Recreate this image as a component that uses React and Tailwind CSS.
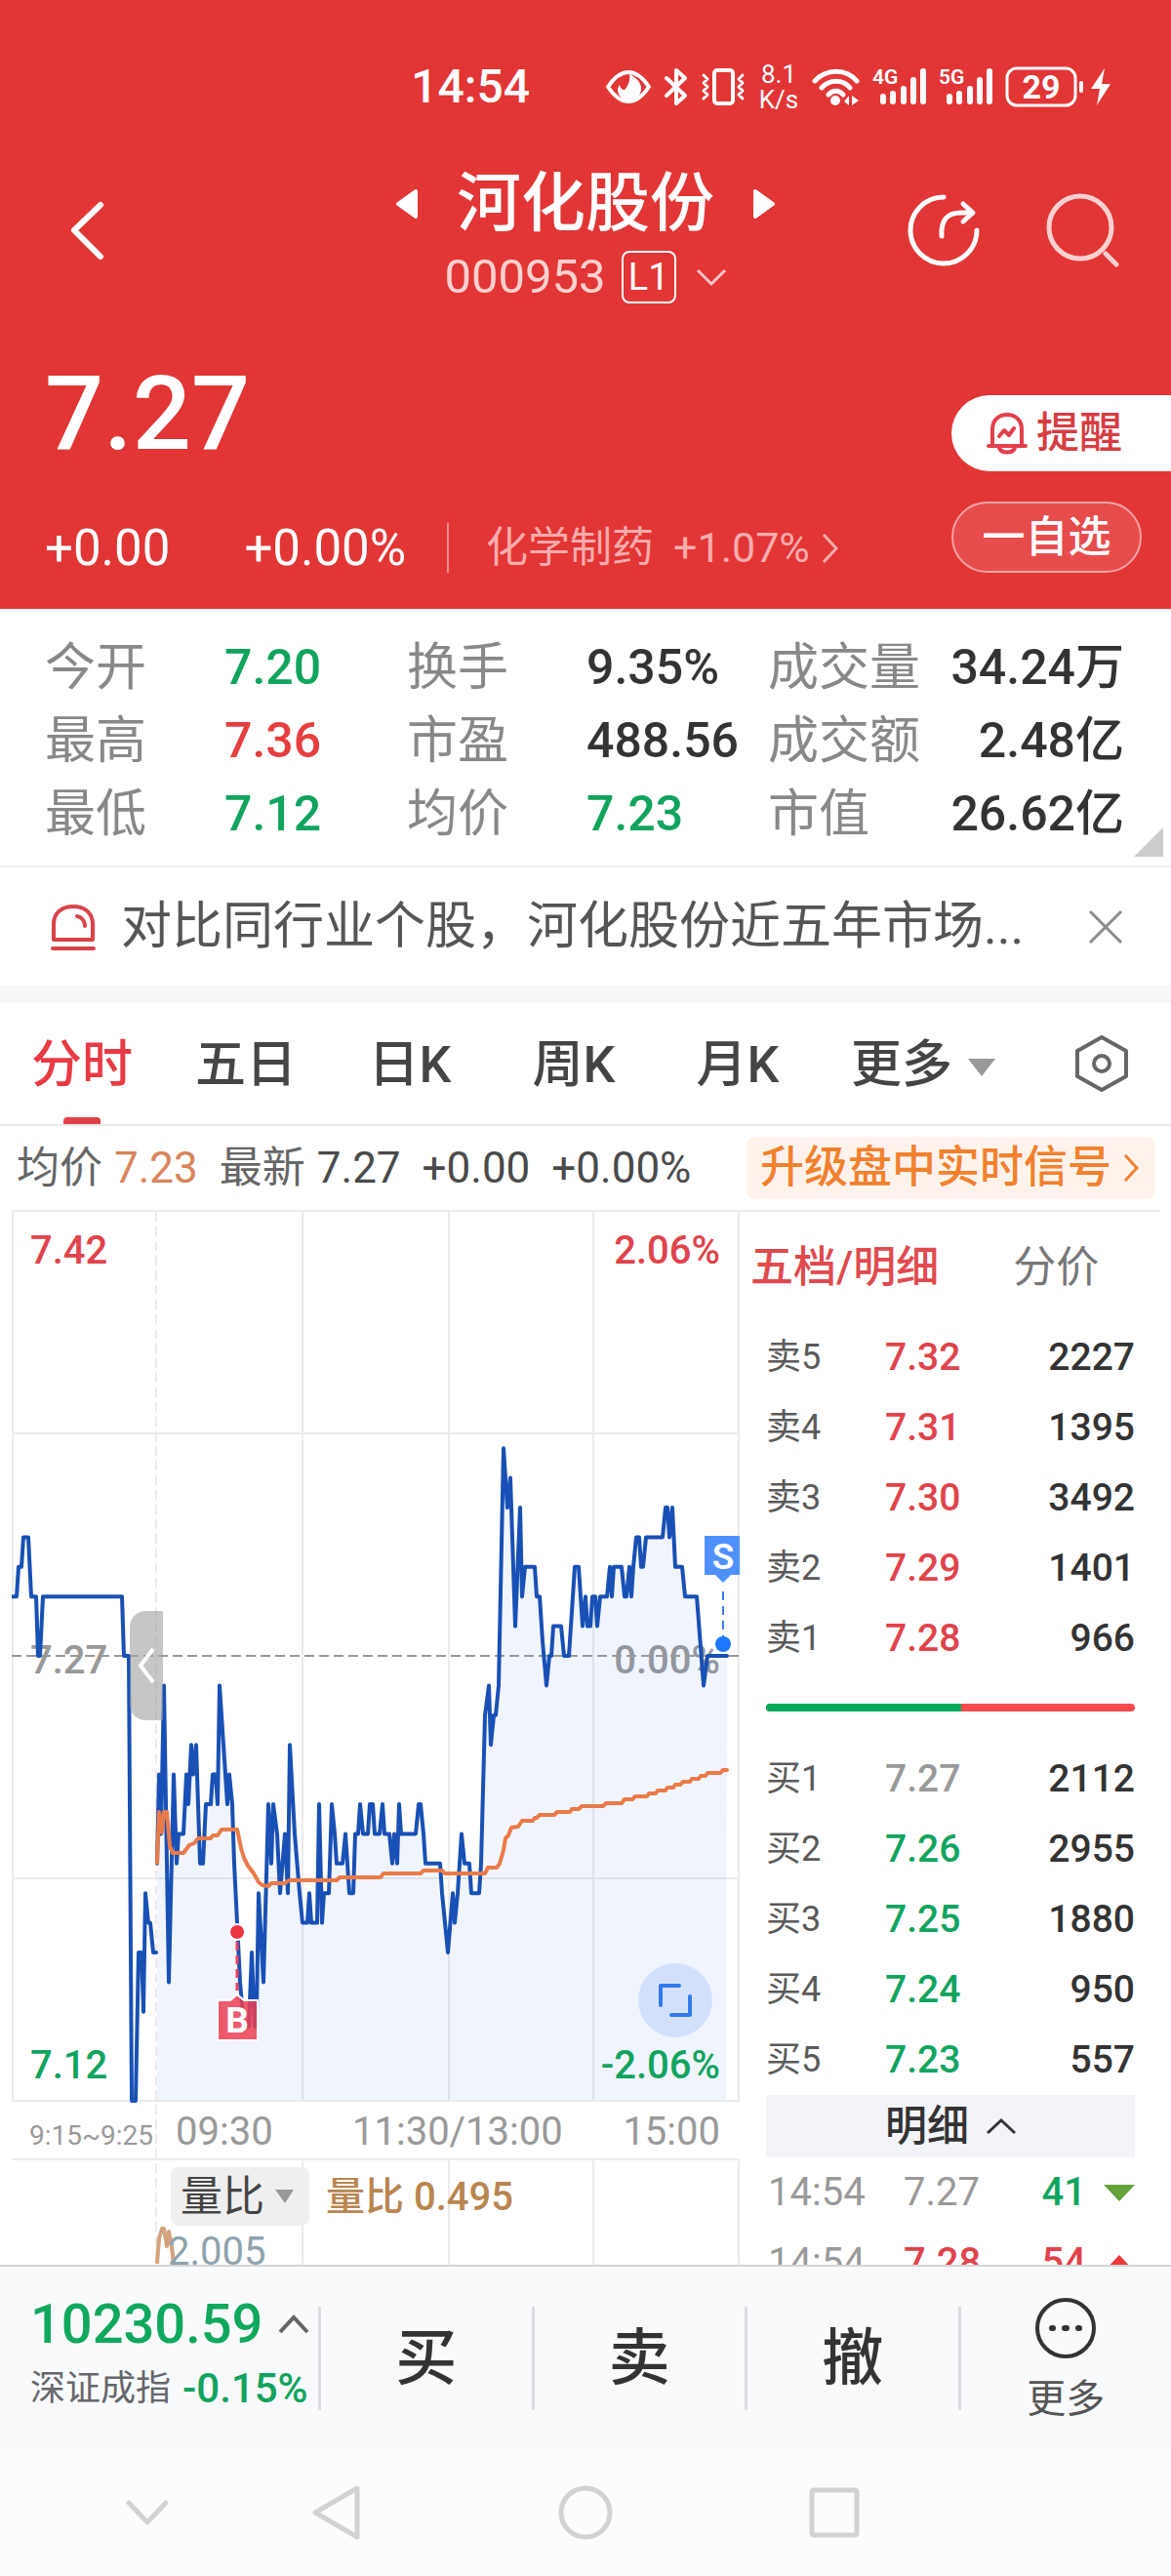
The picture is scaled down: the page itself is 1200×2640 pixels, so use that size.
import { useState } from "react";

const RED = "#e0434b";
const GREEN = "#10a45f";
const GRAY = "#999999";

// [x, ticks from the previous close], one tick is 0.01
const auctionLine = [
  [12, 2], [17, 2], [19, 3], [22, 3], [24, 4], [29, 4], [32, 2], [37, 2], [39, 0], [41, 0], [44, 2], [125, 2],
  [127, 0], [132, 0], [135, -15], [139, -15], [142, -10], [145, -10], [147, -12], [149, -8], [152, -9],
  [154, -9], [157, -10], [160, -10],
];

const priceLine = [
  [161, -7], [163, -4], [165, -6], [168, -1], [173, -11], [178, -4], [181, -7], [183, -6], [188, -6], [191, -4],
  [193, -5], [196, -3], [198, -4], [201, -3], [205, -7], [208, -7], [211, -5], [216, -5], [218, -4], [221, -4],
  [223, -5], [225, -1], [229, -3], [233, -5], [235, -4], [238, -5], [240, -7], [243, -9], [246, -11], [250, -12.5],
  [255, -12.5], [258, -10], [261, -12.5], [263, -12], [265, -8], [270, -11], [275, -5], [278, -7], [280, -5],
  [284, -6], [287, -8], [292, -6], [295, -8], [297, -3], [302, -6], [307, -8], [310, -9], [315, -9], [317, -8],
  [319, -9], [325, -9], [327, -5], [330, -9], [332, -8], [337, -8], [340, -5], [343, -6], [345, -7], [351, -7],
  [354, -6], [358, -8], [362, -8], [364, -6], [367, -6], [369, -5], [372, -6], [377, -6], [379, -5], [382, -5],
  [384, -6], [389, -6], [392, -5], [394, -6], [399, -6], [402, -7], [404, -6], [407, -7], [409, -5], [411, -6],
  [426, -6], [429, -5], [431, -5], [434, -6], [436, -7], [451, -7], [453, -8], [459, -10], [464, -8], [466, -9],
  [469, -8], [473, -6], [476, -7], [481, -7], [483, -8], [491, -8], [493, -7], [497, -2], [501, -1], [503, -3],
  [506, -2], [508, -2], [511, -1], [516, 7], [520, 5], [523, 6], [528, 1], [533, 5], [535, 2], [538, 3],
  [548, 3], [550, 2], [553, 2], [556, 0.5], [560, -1], [563, 0], [565, 0], [567, 1], [575, 1], [578, 0], [583, 0],
  [586, 1.5], [589, 3], [593, 3], [597, 1], [600, 2], [602, 1], [605, 1], [607, 2], [610, 2], [612, 1], [615, 2],
  [622, 2], [625, 3], [627, 2], [629, 3], [637, 3], [640, 2], [642, 2], [645, 3], [647, 2], [649, 3], [652, 4],
  [655, 4], [657, 3], [659, 3], [662, 4], [679, 4], [682, 5], [684, 5], [686, 4], [689, 5], [692, 3], [699, 3],
  [702, 2], [714, 2], [718, 0.3], [721, -1], [725, 0], [745, 0],
];

// running average, already in chart units
const averageLine =
  "161,669 163,617 166,638 168,617 171,617 174,652 177,659 188,659 194,651 199,649 203,644 216,644 218,641 223,641 " +
  "227,635 243,635 247,654 250,664 254,672 260,680 265,689 269,692 275,693 278,690 292,690 296,687 345,687 348,684 " +
  "390,684 393,680 431,680 434,677 453,677 456,680 497,680 500,674 509,674 512,670 516,656 518,644 521,641 524,633 " +
  "531,632 535,626 546,626 548,623 550,623 553,620 568,620 571,617 584,617 586,614 593,614 596,611 618,611 621,608 " +
  "637,608 640,604 648,604 651,601 663,601 665,598 672,598 674,595 682,595 684,592 690,592 692,589 697,589 700,586 " +
  "707,586 709,583 716,583 718,580 723,580 725,577 738,577 741,574 745,574";

const toPoints = (line) => line.map(([x, tick]) => `${x},${457 - tick * 30.4}`).join(" ");

const stats = [
  ["今开", "7.20", "text-[#10a45f]"],
  ["换手", "9.35%", "text-[#333333]"],
  ["成交量", "34.24万", "text-[#333333]"],
  ["最高", "7.36", "text-[#e63e3e]"],
  ["市盈", "488.56", "text-[#333333]"],
  ["成交额", "2.48亿", "text-[#333333]"],
  ["最低", "7.12", "text-[#10a45f]"],
  ["均价", "7.23", "text-[#10a45f]"],
  ["市值", "26.62亿", "text-[#333333]"],
];

const sells = [
  ["卖5", "7.32", "2227"],
  ["卖4", "7.31", "1395"],
  ["卖3", "7.30", "3492"],
  ["卖2", "7.29", "1401"],
  ["卖1", "7.28", "966"],
];

const buys = [
  ["买1", "7.27", "2112"],
  ["买2", "7.26", "2955"],
  ["买3", "7.25", "1880"],
  ["买4", "7.24", "950"],
  ["买5", "7.23", "557"],
];

function priceColor(price) {
  if (price > 7.27) return "text-[#e0434b]";
  if (price < 7.27) return "text-[#10a45f]";
  return "text-[#999999]";
}

function Signal({ label }) {
  return (
    <svg width="55" height="44" viewBox="0 -4 55 44" fill="none" stroke="#fff" strokeWidth="6" strokeLinecap="round" className="mb-1">
      <text x="0" y="17" fontSize="21" fontWeight="600" fill="#fff" stroke="none">{label}</text>
      <path d="M11 30v5M21 27v8M32 22v13M42 13v22M52 4v31" />
    </svg>
  );
}

function StatusBar() {
  return (
    <div className="flex h-[140px] items-center justify-end gap-[13px] pt-[38px] pr-[62px]">
      <span className="mr-[64px] text-[48px] leading-[56px] font-medium">14:54</span>
      <svg width="48" height="36" viewBox="0 0 48 36">
        <path d="M3 18C11 6 18 3 24 3s13 3 21 15c-8 12-15 15-21 15S11 30 3 18Z" fill="none" stroke="#fff" strokeWidth="4" strokeLinejoin="round" />
        <path d="M25 5c8 4 12 9 12 15 0 7-6 12-12 12-7 0-12-5-12-11 0-2 1-4 2-5 1 4 3 5 5 5 4-4 6-10 5-16Z" fill="#fff" />
      </svg>
      <svg width="24" height="40" viewBox="0 0 24 40" fill="none" stroke="#fff" strokeWidth="4" strokeLinejoin="round" strokeLinecap="round">
        <path d="M2 11l19 18-9 8V3l9 8L2 29" />
      </svg>
      <svg width="46" height="40" viewBox="0 0 46 40" fill="none" stroke="#fff" strokeWidth="4" strokeLinejoin="round" strokeLinecap="round">
        <rect x="14" y="3" width="19" height="34" rx="3" />
        <path d="M3 8l4 4-4 4 4 4-4 4 4 4-4 4M43 8l-4 4 4 4-4 4 4 4-4 4 4 4" strokeWidth="3" />
      </svg>
      <span className="flex w-[42px] flex-col items-center text-[26px] leading-[26px]">
        <span>8.1</span>
        <span>K/s</span>
      </span>
      <svg width="49" height="40" viewBox="0 0 49 40" fill="none" stroke="#fff" strokeWidth="5" strokeLinecap="round">
        <path d="M3 14c12-13 32-13 43 0M10 21c8-9 22-9 29 0M17 28c4-5 11-5 15 0" />
        <circle cx="24" cy="34" r="5" fill="#fff" stroke="none" />
        <path d="M38 29v10l-5-4zM41 29v10l7-5z" fill="#fff" stroke="none" />
      </svg>
      <Signal label="4G" />
      <Signal label="5G" />
      <svg width="108" height="42" viewBox="0 0 108 42">
        <rect x="2" y="2" width="70" height="38" rx="10" fill="none" stroke="#fff" strokeWidth="3" />
        <text x="37" y="33" textAnchor="middle" fontSize="34" fontWeight="700" fill="#fff">29</text>
        <path d="M78 17v8" stroke="#fff" strokeWidth="4" strokeLinecap="round" />
        <path d="M102 2L88 23h9l-3 17 14-22h-9z" fill="#fff" />
      </svg>
    </div>
  );
}

function Header() {
  return (
    <header className="bg-[#e23536] text-white">
      <StatusBar />
      <div className="grid h-[192px] grid-cols-[1fr_auto_1fr] items-center">
        <button aria-label="返回" className="ml-[62px] w-12">
          <svg width="48" height="60" viewBox="0 0 48 60" fill="none" stroke="#fff" strokeWidth="6" strokeLinecap="round" strokeLinejoin="round">
            <path d="M41 4L14 30l27 27" />
          </svg>
        </button>
        <div className="flex flex-col items-center gap-2 pt-2">
          <div className="flex items-center gap-[40px]">
            <button aria-label="上一只">
              <svg width="22" height="32" viewBox="0 0 22 32" fill="#fff" stroke="#fff" strokeWidth="4" strokeLinejoin="round">
                <path d="M20 3v26L2 16z" />
              </svg>
            </button>
            <h1 className="text-[66px] leading-[80px] font-medium">河化股份</h1>
            <button aria-label="下一只">
              <svg width="22" height="32" viewBox="0 0 22 32" fill="#fff" stroke="#fff" strokeWidth="4" strokeLinejoin="round">
                <path d="M2 3v26l18-13z" />
              </svg>
            </button>
          </div>
          <button className="flex items-center gap-4">
            <span className="text-[49px] leading-[54px] text-[#ffd0d0]">000953</span>
            <span className="flex h-[54px] w-[56px] items-center justify-center rounded-lg border-2 border-white text-[38px] leading-[48px]">L1</span>
            <svg className="ml-1" width="32" height="20" viewBox="0 0 32 20" fill="none" stroke="#ffc4c4" strokeWidth="3">
              <path d="M2 3l14 14L30 3" />
            </svg>
          </button>
        </div>
        <div className="flex justify-end gap-[66px] pr-[53px]">
          <button aria-label="分享">
            <svg width="76" height="76" viewBox="0 0 76 76" fill="none" stroke="#fff" strokeWidth="5" strokeLinecap="round" strokeLinejoin="round">
              <path d="M38 4a34 34 0 1 0 34 34" />
              <path d="M36 44c-1-16 5-24 20-24h11M58 11l10 9-10 9" />
            </svg>
          </button>
          <button aria-label="搜索">
            <svg width="76" height="76" viewBox="0 0 76 76" fill="none" stroke="#ffd0d0" strokeWidth="5" strokeLinecap="round">
              <circle cx="36" cy="35" r="32" />
              <path d="M62 62l11 11" />
            </svg>
          </button>
        </div>
      </div>
      <div className="flex items-start justify-between pb-[37px]">
        <div className="pt-[36px] pl-[46px]">
          <p className="text-[106px] leading-[112px] font-medium">7.27</p>
          <div className="mt-[56px] flex h-[51px] items-center text-[51px] leading-[51px]">
            <span>+0.00</span>
            <span className="ml-[76px]">+0.00%</span>
            <a href="#sector" className="ml-[42px] flex items-center gap-[20px] border-l-2 border-[#f08a8b] pl-[38px] text-[43px] text-[#f7abac]">
              <span>化学制药</span>
              <span>+1.07%</span>
              <svg className="-ml-2" width="18" height="32" viewBox="0 0 18 32" fill="none" stroke="#f7abac" strokeWidth="3">
                <path d="M2 2l13 14L2 30" />
              </svg>
            </a>
          </div>
        </div>
        <div className="flex w-[225px] flex-col gap-[31px] pt-[73px]">
          <button className="flex h-[78px] items-center gap-[9px] rounded-l-full bg-white pl-[36px] text-[44px] leading-[48px] font-medium text-[#d73c42]">
            <svg width="42" height="44" viewBox="0 0 42 44" fill="none" stroke="#e2404a" strokeWidth="4" strokeLinecap="round" strokeLinejoin="round">
              <path d="M6 34V18C6 8 13 3 21 3s15 5 15 15v16M2 35h38M13 37c2 6 14 6 16 0M13 25l5-6 5 5 5-7" />
            </svg>
            提醒
          </button>
          <button className="mr-[30px] h-[73px] rounded-full border-2 border-[#f4a3a4] bg-[#e74c4d] text-[44px] leading-[68px] font-medium">
            一自选
          </button>
        </div>
      </div>
    </header>
  );
}

function Stats() {
  return (
    <section className="relative border-b-2 border-[#eeeeee] pt-[23px] pb-[15px] pl-[46px] pr-[48px]">
      <dl className="grid grid-cols-[371fr_370fr_365fr]">
        {stats.map(([label, value, color], i) => (
          <div key={i} className={`flex h-[75px] items-center leading-[75px] ${i % 3 === 2 ? "justify-between" : ""}`}>
            <dt className={`text-[52px] text-[#888888] ${i % 3 === 2 ? "" : "w-[184px]"}`}>{label}</dt>
            <dd className={`text-[50px] font-medium ${color}`}>{value}</dd>
          </div>
        ))}
      </dl>
      <svg className="absolute right-2 bottom-[9px]" width="30" height="30" viewBox="0 0 30 30">
        <path d="M30 0v30H0z" fill="#cccccc" />
      </svg>
    </section>
  );
}

function Notice() {
  return (
    <section className="flex h-[121px] items-center pr-[48px] pl-[52px]">
      <svg className="shrink-0" width="46" height="48" viewBox="0 0 46 48" fill="none" stroke="#d9444b" strokeWidth="4" strokeLinecap="round" strokeLinejoin="round">
        <path d="M3 37V21C3 9 12 3 23 3s20 6 20 18v16zM2 46h42M27 13c5 1 8 5 8 10" />
      </svg>
      <p className="ml-[26px] min-w-0 flex-1 truncate text-[52px] leading-[72px] text-[#555555]">对比同行业个股，河化股份近五年市场...</p>
      <button aria-label="关闭">
        <svg width="38" height="38" viewBox="0 0 38 38" stroke="#8c8c8c" strokeWidth="3">
          <path d="M3 3l32 32M35 3L3 35" />
        </svg>
      </button>
    </section>
  );
}

function Tabs() {
  const [active, setActive] = useState("分时");
  return (
    <nav className="flex h-[126px] items-stretch border-b-2 border-[#e8e8e8] text-[52px] leading-[60px] font-medium text-[#444444]">
      {["分时", "五日", "日K", "周K", "月K", "更多"].map((tab) => (
        <button
          key={tab}
          onClick={() => setActive(tab)}
          className={`relative flex w-[14%] items-center justify-center pt-1 ${tab === active ? "text-[#e93a44]" : ""}`}
        >
          <span className="relative">
            {tab}
            {tab === "更多" && (
              <svg className="absolute top-[23px] left-full ml-4" width="28" height="18" viewBox="0 0 28 18">
                <path d="M0 0h28L14 18z" fill="#999999" />
              </svg>
            )}
          </span>
          {tab === active && <span className="absolute bottom-0 h-[7px] w-[38px] rounded-t bg-[#e0404a]" />}
        </button>
      ))}
      <button aria-label="设置" className="mr-[42px] ml-auto">
        <svg width="58" height="60" viewBox="0 0 58 60" fill="none" stroke="#666666" strokeWidth="4" strokeLinejoin="round">
          <path d="M29 3l25 14v26L29 57 4 43V17z" />
          <circle cx="29" cy="30" r="8" />
        </svg>
      </button>
    </nav>
  );
}

function QuoteLine() {
  return (
    <div className="flex h-[86px] items-center gap-[22px] pr-4 pl-[17px] text-[44px] leading-[64px] whitespace-nowrap text-[#4a4a4a]">
      <span className="flex gap-3 text-[#666666]">均价<span className="text-[#d9855a]">7.23</span></span>
      <span className="flex gap-3"><span className="text-[#666666]">最新</span>7.27</span>
      <span>+0.00</span>
      <span>+0.00%</span>
      <a href="#signal" className="ml-auto flex h-[64px] items-center gap-[12px] rounded-lg bg-[#fff3ec] pr-4 pl-[14px] text-[45px] font-medium text-[#f2812e]">
        升级盘中实时信号
        <svg width="17" height="28" viewBox="0 0 17 28" fill="none" stroke="#f2812e" strokeWidth="3">
          <path d="M2 1l12 13L2 27" />
        </svg>
      </a>
    </div>
  );
}

function Chart() {
  const points = toPoints(priceLine);
  return (
    <div className="relative">
      <svg className="block h-auto w-full" viewBox="12 2 746 1080" fill="none" role="img" aria-label="分时走势">
        <g stroke="#ebebeb" strokeWidth="2">
          <path d="M13 2v911h744V2M12 229h745M12 685h745M12 973h745M757 973v110" />
          <path d="M310 2v911M460 2v911M608 2v911M310 973v110M460 973v110M608 973v110" />
          <path d="M160 2v1080" strokeDasharray="10 5" />
        </g>
        <g fontSize="40" fontWeight="500" fill={GRAY}>
          <text x="31" y="475">7.27</text>
          <text x="738" y="475" textAnchor="end">0.00%</text>
        </g>
        <polygon points={`161,912 ${points} 744,912`} fill="#3b78e7" fillOpacity="0.08" />
        <path d="M12 457h745" stroke="#999999" strokeWidth="2" strokeDasharray="10 5" />
        <g stroke="#1850b5" strokeWidth="4" strokeLinejoin="round" strokeLinecap="round">
          <polyline points={toPoints(auctionLine)} />
          <polyline points={points} />
        </g>
        <polyline points={averageLine} stroke="#ea7a47" strokeWidth="4" strokeLinejoin="round" strokeLinecap="round" />

        <g fontSize="40" fontWeight="500">
          <text x="31" y="55" fill={RED}>7.42</text>
          <text x="738" y="55" fill={RED} textAnchor="end">2.06%</text>
          <text x="31" y="890" fill={GREEN}>7.12</text>
          <text x="738" y="890" fill={GREEN} textAnchor="end">-2.06%</text>
        </g>

        <path d="M243 750v50" stroke="#f0405a" strokeWidth="3" strokeDasharray="9 5" />
        <circle cx="243" cy="740" r="8" fill="#f03340" stroke="#fff" strokeWidth="2" />
        <path d="M223 810h13l7-6 7 6h14v41h-41z" fill="#ec3f52" fillOpacity="0.85" stroke="#fff" strokeWidth="2" />
        <text x="243" y="843" fontSize="37" fontWeight="700" fill="#fff" textAnchor="middle">B</text>

        <path d="M741 391v50" stroke="#3b7ef0" strokeWidth="2" strokeDasharray="9 6" />
        <circle cx="741" cy="445" r="8" fill="#1e78ff" />
        <path d="M722 334h36v40h-9l-8 8-8-8h-11z" fill="#4f90ff" />
        <text x="741" y="368" fontSize="37" fontWeight="600" fill="#fff" textAnchor="middle">S</text>

        <g fontSize="40" fill={GRAY}>
          <text x="30" y="958" fontSize="28">9:15~9:25</text>
          <text x="180" y="958">09:30</text>
          <text x="361" y="958">11:30/13:00</text>
          <text x="738" y="958" textAnchor="end">15:00</text>
        </g>

        <path d="M161 1080l2-26 3-10 2 0 3 18 2-15 3 16 2 17" stroke="#d3a27c" strokeWidth="4" strokeLinejoin="round" />
        <text x="172" y="1081" fontSize="40" fill="#8fa3ad">2.005</text>
        <text x="334" y="1025" fontSize="40" fontWeight="500" fill="#b98550">量比 0.495</text>
      </svg>
      <button aria-label="收起竞价" className="absolute top-[409px] left-[121px] flex h-[112px] w-[34px] items-center justify-center rounded-l-2xl bg-[#a0a0a0]/60">
        <svg width="20" height="38" viewBox="0 0 20 38" fill="none" stroke="#fff" strokeWidth="4">
          <path d="M17 2L4 19l13 17" />
        </svg>
      </button>
      <button aria-label="全屏" className="absolute top-[770px] right-[28px] flex size-[76px] items-center justify-center rounded-full bg-[#d3e0fc]">
        <svg width="36" height="36" viewBox="0 0 36 36" fill="none" stroke="#3378ee" strokeWidth="4" strokeLinecap="round" strokeLinejoin="round">
          <path d="M3 23V3h19M33 14v19H14" />
        </svg>
      </button>
      <div className="absolute top-[979px] left-[163px] flex items-center">
        <select
          aria-label="指标"
          className="h-[60px] w-[142px] appearance-none rounded-lg bg-[#efefef] pl-[10px] text-[43px] leading-[56px] text-[#444444]"
        >
          <option>量比</option>
        </select>
        <svg className="pointer-events-none absolute right-4" width="19" height="14" viewBox="0 0 19 14">
          <path d="M0 0h19L10 14z" fill="#999999" />
        </svg>
      </div>
    </div>
  );
}

function BookTable({ rows }) {
  return (
    <table className="w-full border-collapse font-medium">
      <tbody>
        {rows.map(([label, price, volume]) => (
          <tr key={label} className="h-[72px] leading-[48px]">
            <th scope="row" className="w-[122px] text-left text-[36px] font-normal text-[#5a5a5a]">{label}</th>
            <td className={`text-left text-[39px] ${priceColor(Number(price))}`}>{price}</td>
            <td className="text-right text-[39px] text-[#333333]">{volume}</td>
          </tr>
        ))}
      </tbody>
    </table>
  );
}

function OrderBook() {
  return (
    <div className="pr-[25px] pl-[27px]">
      <div className="-ml-4 flex h-[113px] items-center gap-[76px] text-[44px] leading-[56px]">
        <button className="font-medium text-[#e04a4e]">五档/明细</button>
        <button className="text-[#777777]">分价</button>
      </div>
      <BookTable rows={sells} />
      <div className="mt-[31px] mb-[33px] flex h-2 overflow-hidden rounded-full bg-[#f94b4e]">
        <div className="w-[53%] bg-[#06aa5d]" />
      </div>
      <BookTable rows={buys} />
      <button className="flex h-[64px] w-full items-center justify-center gap-[18px] bg-[#f2f4f9] text-[43px] leading-[56px] font-medium text-[#333333]">
        明细
        <svg width="30" height="18" viewBox="0 0 30 18" fill="none" stroke="#333333" strokeWidth="3">
          <path d="M1 16L15 3l14 13" />
        </svg>
      </button>
      <table className="w-full border-collapse text-[40px] leading-[48px]">
        <tbody>
          <tr className="h-[72px]">
            <td className="w-[141px] pl-[2px] text-[#999999]">14:54</td>
            <td className="text-[#999999]">7.27</td>
            <td className="text-right font-medium text-[#10a45f]">41</td>
            <td className="w-[50px]">
              <svg className="ml-auto" width="32" height="17" viewBox="0 0 32 17"><path d="M0 0h32L16 17z" fill="#66a13c" /></svg>
            </td>
          </tr>
          <tr className="h-[72px]">
            <td className="w-[141px] pl-[2px] text-[#999999]">14:54</td>
            <td className="font-medium text-[#e0434b]">7.28</td>
            <td className="text-right font-medium text-[#e0434b]">54</td>
            <td className="w-[50px]">
              <svg className="ml-auto" width="32" height="17" viewBox="0 0 32 17"><path d="M0 17h32L16 0z" fill="#ee3a3a" /></svg>
            </td>
          </tr>
        </tbody>
      </table>
    </div>
  );
}

function TradeBar() {
  return (
    <div className="flex h-[188px] shrink-0 border-t-2 border-[#d4d4d6] bg-[#f9fafc] pt-[41px] text-[#333333]">
      <button className="-mt-4 w-[326px] shrink-0 self-start pl-[31px] text-left">
        <span className="flex items-center gap-[16px] text-[56px] leading-[68px] font-medium text-[#10a85e]">
          10230.59
          <svg width="32" height="20" viewBox="0 0 32 20" fill="none" stroke="#666666" strokeWidth="4">
            <path d="M2 18L16 3l14 15" />
          </svg>
        </span>
        <span className="flex items-center gap-[12px] text-[36px] leading-[64px] whitespace-nowrap text-[#66676b]">
          深证成指
          <span className="text-[42px] font-medium text-[#10a45f]">-0.15%</span>
        </span>
      </button>
      {["买", "卖", "撤"].map((name) => (
        <button key={name} className="h-[106px] flex-1 border-l-3 border-[#dcdde0] text-[63px] leading-[106px] font-medium">
          {name}
        </button>
      ))}
      <button className="flex h-[106px] flex-1 flex-col items-center border-l-3 border-[#dcdde0] text-[40px] leading-[50px] text-[#555555]">
        <svg className="-mt-[10px] mb-[16px] shrink-0" width="64" height="64" viewBox="0 0 64 64" fill="none" stroke="#333333" strokeWidth="4">
          <circle cx="32" cy="32" r="29" />
          <path d="M18 32h1M31 32h2M45 32h1" strokeWidth="6" strokeLinecap="round" />
        </svg>
        更多
      </button>
    </div>
  );
}

function SystemNav() {
  return (
    <div className="grid h-[131px] shrink-0 grid-cols-[302fr_86fr_424fr_86fr_302fr] items-center bg-[#fcfcfc] text-[#d2d2d2]">
      <button aria-label="隐藏导航" className="flex justify-center">
        <svg width="46" height="28" viewBox="0 0 46 28" fill="none" stroke="currentColor" strokeWidth="5" strokeLinecap="round" strokeLinejoin="round">
          <path d="M4 4l19 20L42 4" />
        </svg>
      </button>
      <button aria-label="后退" className="flex justify-center">
        <svg width="52" height="58" viewBox="0 0 52 58" fill="none" stroke="currentColor" strokeWidth="5" strokeLinejoin="round">
          <path d="M47 4v50L4 29z" />
        </svg>
      </button>
      <button aria-label="主页" className="flex justify-center">
        <svg width="58" height="58" viewBox="0 0 58 58" fill="none" stroke="currentColor" strokeWidth="5">
          <circle cx="29" cy="29" r="25" />
        </svg>
      </button>
      <button aria-label="最近任务" className="flex justify-center">
        <svg width="52" height="52" viewBox="0 0 52 52" fill="none" stroke="currentColor" strokeWidth="5" strokeLinejoin="round">
          <rect x="3" y="3" width="46" height="46" rx="2" />
        </svg>
      </button>
      <span />
    </div>
  );
}

export default function App() {
  return (
    <div className="flex h-screen flex-col bg-white font-['Roboto','Noto_Sans_CJK_SC',sans-serif]">
      <main className="min-h-0 flex-1 overflow-hidden">
        <Header />
        <Stats />
        <Notice />
        <div className="h-[18px] bg-[#f7f7f7]" />
        <Tabs />
        <QuoteLine />
        <section className="mx-3 grid grid-cols-[746fr_430fr] border-t-2 border-[#ebebeb]">
          <Chart />
          <OrderBook />
        </section>
      </main>
      <TradeBar />
      <SystemNav />
    </div>
  );
}
